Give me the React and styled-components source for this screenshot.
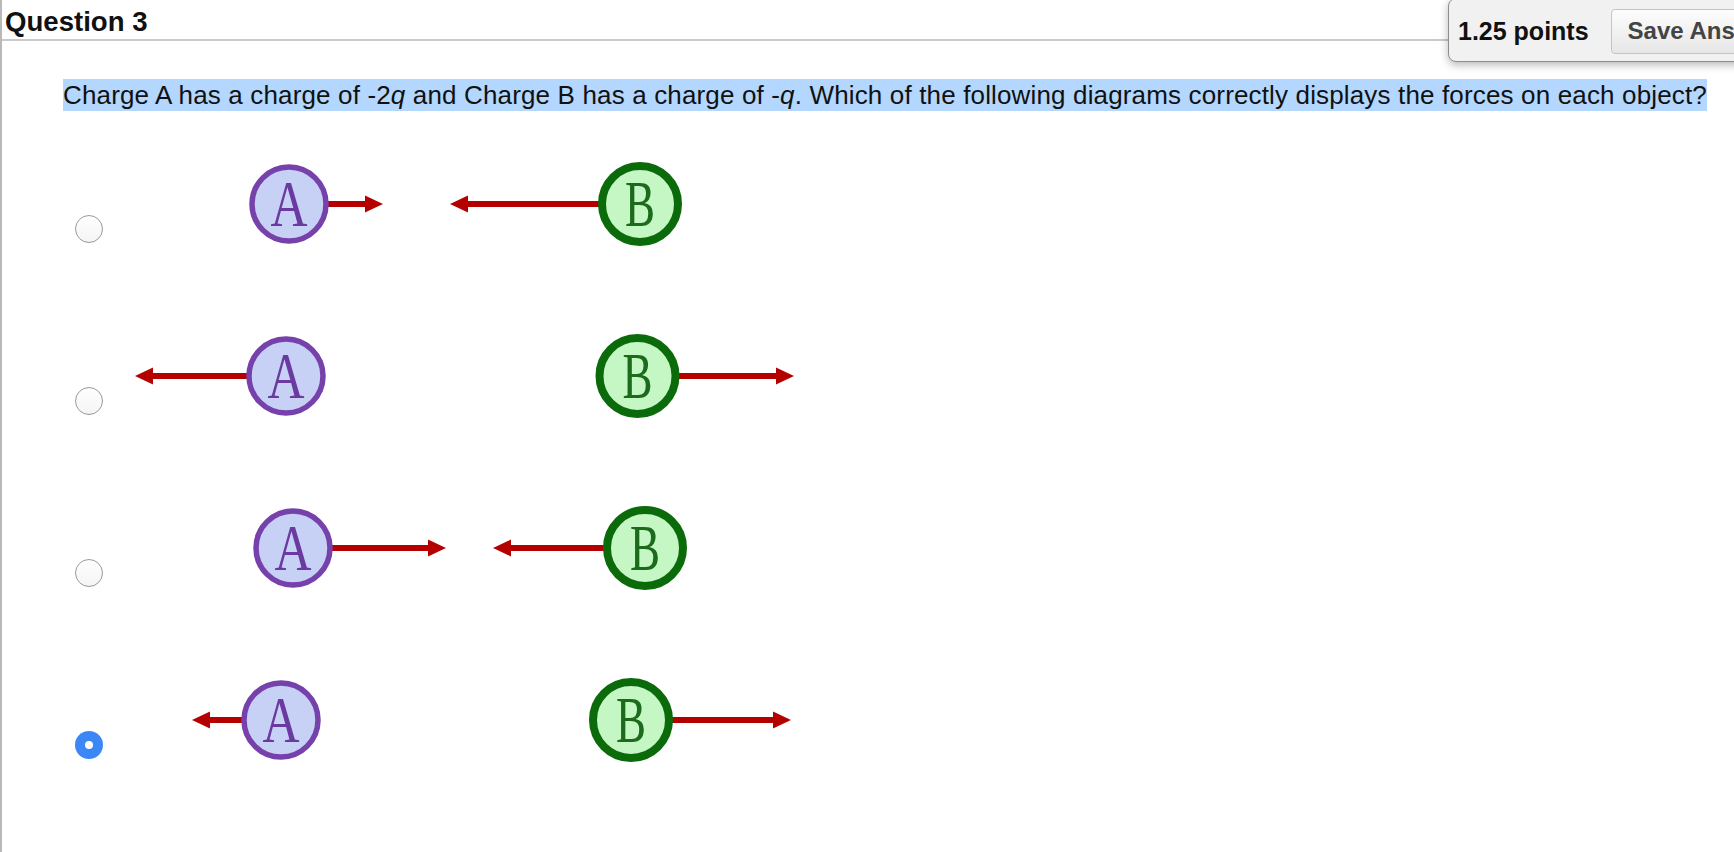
import React from 'react';
import styled, { createGlobalStyle } from 'styled-components';

const GlobalStyle = createGlobalStyle`
  html, body {
    margin: 0;
    padding: 0;
    background: #fff;
  }
  body {
    font-family: "Liberation Sans", Arial, Helvetica, sans-serif;
    color: #111;
    overflow: hidden;
  }
`;

// answer diagrams: x of the charges, and arrows as [start, tip] in svg coords
const options = [
  { a: 179, b: 530, arrows: [[179, 273], [530, 340]] },
  { a: 176, b: 527.5, arrows: [[176, 25], [527.5, 684]] },
  { a: 183, b: 535, arrows: [[183, 336], [535, 383]] },
  { a: 171, b: 521, arrows: [[171, 82], [521, 681]], checked: true },
];

const Arrow = ({ from, to, y = 60 }) => {
  const dir = to > from ? 1 : -1;
  const base = to - dir * 18;
  const x1 = Math.min(from, base);
  return (
    <g fill="#b50000">
      <rect x={x1} y={y - 3} width={Math.abs(base - from) + 1} height={6} />
      <polygon points={`${to},${y} ${base},${y - 8.5} ${base},${y + 8.5}`} />
    </g>
  );
};

const Charge = ({ cx, label }) => {
  const isA = label === 'A';
  return (
    <g>
      <circle
        cx={cx}
        cy={60}
        r={isA ? 37 : 38}
        fill={isA ? '#c7d1f6' : '#c4f7c4'}
        stroke={isA ? '#7741ab' : '#0b6b0b'}
        strokeWidth={isA ? 5.5 : 8}
      />
      <text
        x={cx}
        y={82}
        textAnchor="middle"
        fontFamily='"Liberation Serif", "DejaVu Serif", serif'
        fontSize="66"
        fill={isA ? '#6b3aa0' : '#1c6b1c'}
        textLength={isA ? 37 : 30}
        lengthAdjust="spacingAndGlyphs"
      >
        {label}
      </text>
    </g>
  );
};

const App = () => {
  return (
    <>
      <GlobalStyle />
      <Page>
        <Header>
          <Title>Question 3</Title>
        </Header>
        <ScoreBar>
          <Points>1.25 points</Points>
          <SaveButton>Save Answer</SaveButton>
        </ScoreBar>

        <Prompt>
          <Highlight>
            Charge A has a charge of -2<i>q</i> and Charge B has a charge of -<i>q</i>. Which of the
            following diagrams correctly displays the forces on each object?
          </Highlight>
        </Prompt>

        <OptionList>
          {options.map((opt, i) => (
            <Option key={i}>
              <Radio $checked={opt.checked} role="radio" aria-checked={!!opt.checked} />
              <Diagram width="720" height="120" viewBox="0 0 720 120">
                {opt.arrows.map(([f, t], j) => (
                  <Arrow key={j} from={f} to={t} />
                ))}
                <Charge cx={opt.a} label="A" />
                <Charge cx={opt.b} label="B" />
              </Diagram>
            </Option>
          ))}
        </OptionList>
      </Page>
    </>
  );
};

// Стили
const Page = styled.div`
  position: relative;
  min-height: 100vh;
  border-left: 2px solid #b9b9b9;
  box-sizing: border-box;
`;

const Header = styled.div`
  height: 39px;
  border-bottom: 2px solid #cacaca;
  padding-left: 3px;
`;

const Title = styled.h2`
  margin: 0;
  padding-top: 4px;
  font-size: 27.6px;
  line-height: 36px;
  font-weight: bold;
  color: #111;
  white-space: nowrap;
`;

const ScoreBar = styled.div`
  position: absolute;
  top: -2px;
  left: 1446px;
  width: 340px;
  height: 64px;
  box-sizing: border-box;
  display: flex;
  align-items: center;
  gap: 22px;
  padding: 2px 0 0 9px;
  background: #f1f1f1;
  border: 1.5px solid #8d8d8d;
  border-radius: 8px;
  box-shadow: 0 3px 8px rgba(0, 0, 0, 0.28);
`;

const Points = styled.span`
  font-size: 25px;
  font-weight: bold;
  color: #111;
  white-space: nowrap;
`;

const SaveButton = styled.button`
  height: 45px;
  padding: 0 16px;
  font-family: inherit;
  font-size: 24px;
  font-weight: bold;
  color: #444;
  white-space: nowrap;
  background: linear-gradient(#fdfdfd, #e6e6e6);
  border: 1px solid #c4c4c4;
  border-radius: 4px;
  cursor: pointer;
`;

const Prompt = styled.p`
  margin: 39px 0 0 61px;
  font-size: 26px;
  letter-spacing: 0.15px;
  line-height: 31px;
`;

const Highlight = styled.span`
  background: #b3d7fe;
  padding: 1px 0;
  white-space: nowrap;
  i {
    font-style: italic;
  }
`;

const OptionList = styled.div`
  margin-top: 33px;
  display: flex;
  flex-direction: column;
`;

const Option = styled.div`
  height: 172px;
  display: flex;
  align-items: flex-start;
`;

const Radio = styled.span`
  display: block;
  flex: none;
  width: 28px;
  height: 28px;
  margin: 71px 0 0 73px;
  box-sizing: border-box;
  border-radius: 50%;
  position: relative;
  background: ${({ $checked }) => ($checked ? '#3b87f6' : 'linear-gradient(#fff, #f4f4f4)')};
  border: ${({ $checked }) => ($checked ? 'none' : '1px solid #999')};

  &::after {
    content: '';
    display: ${({ $checked }) => ($checked ? 'block' : 'none')};
    position: absolute;
    left: 10px;
    top: 10px;
    width: 8px;
    height: 8px;
    border-radius: 50%;
    background: #fff;
  }
`;

const Diagram = styled.svg`
  display: block;
  flex: none;
  margin-left: 7px;
`;

export default App;
